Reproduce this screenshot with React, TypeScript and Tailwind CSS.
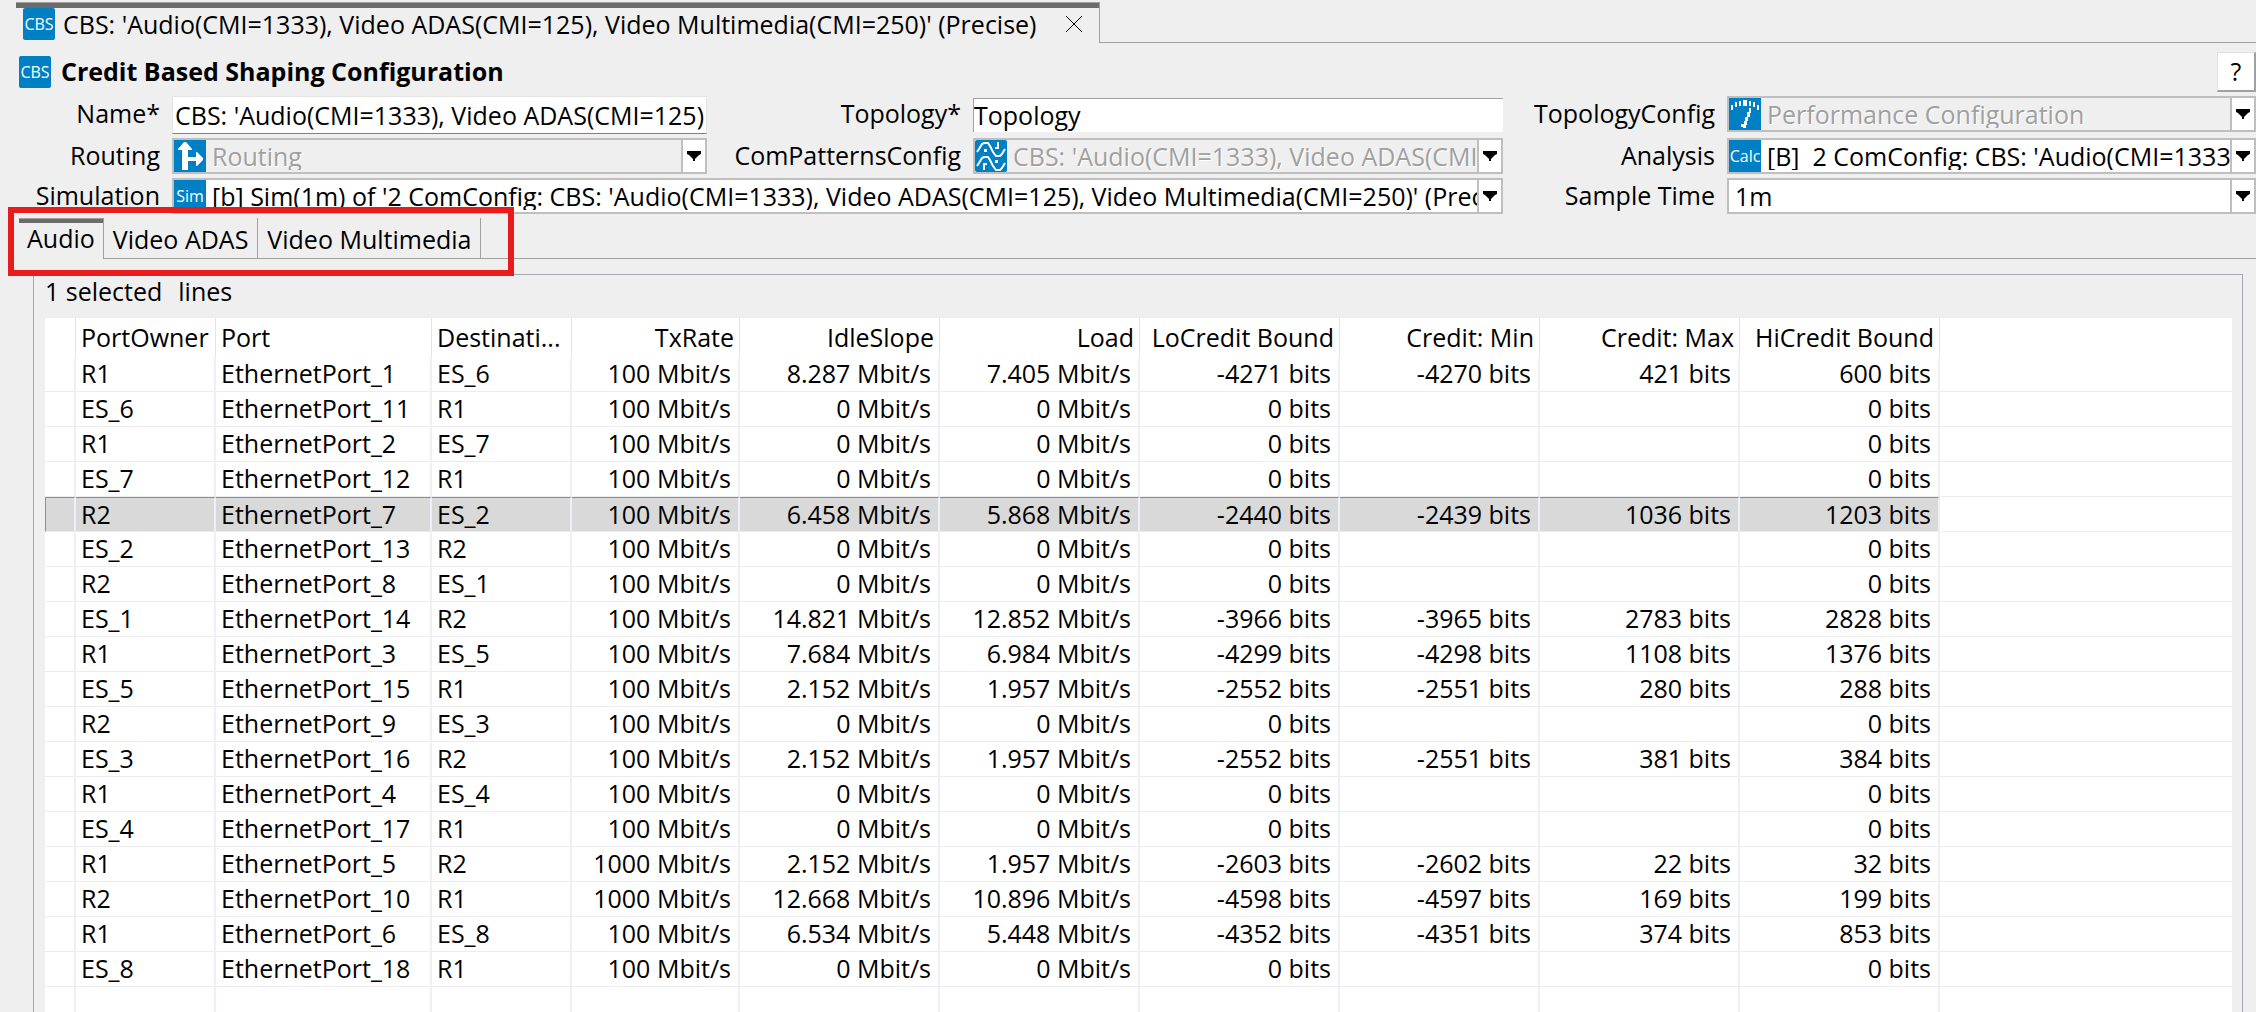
import { ReactNode } from "react";
import clsx from "clsx";

type Row = {
  owner: string;
  port: string;
  dest: string;
  values: string[];
};

const row = (owner: string, port: number, dest: string, ...values: string[]): Row => ({
  owner,
  port: "EthernetPort_" + port,
  dest,
  values,
});

const idle = (owner: string, port: number, dest: string) =>
  row(owner, port, dest, "100 Mbit/s", "0 Mbit/s", "0 Mbit/s", "0 bits", "", "", "0 bits");

const rows: Row[] = [
  row("R1", 1, "ES_6", "100 Mbit/s", "8.287 Mbit/s", "7.405 Mbit/s", "-4271 bits", "-4270 bits", "421 bits", "600 bits"),
  idle("ES_6", 11, "R1"),
  idle("R1", 2, "ES_7"),
  idle("ES_7", 12, "R1"),
  row("R2", 7, "ES_2", "100 Mbit/s", "6.458 Mbit/s", "5.868 Mbit/s", "-2440 bits", "-2439 bits", "1036 bits", "1203 bits"),
  idle("ES_2", 13, "R2"),
  idle("R2", 8, "ES_1"),
  row("ES_1", 14, "R2", "100 Mbit/s", "14.821 Mbit/s", "12.852 Mbit/s", "-3966 bits", "-3965 bits", "2783 bits", "2828 bits"),
  row("R1", 3, "ES_5", "100 Mbit/s", "7.684 Mbit/s", "6.984 Mbit/s", "-4299 bits", "-4298 bits", "1108 bits", "1376 bits"),
  row("ES_5", 15, "R1", "100 Mbit/s", "2.152 Mbit/s", "1.957 Mbit/s", "-2552 bits", "-2551 bits", "280 bits", "288 bits"),
  idle("R2", 9, "ES_3"),
  row("ES_3", 16, "R2", "100 Mbit/s", "2.152 Mbit/s", "1.957 Mbit/s", "-2552 bits", "-2551 bits", "381 bits", "384 bits"),
  idle("R1", 4, "ES_4"),
  idle("ES_4", 17, "R1"),
  row("R1", 5, "R2", "1000 Mbit/s", "2.152 Mbit/s", "1.957 Mbit/s", "-2603 bits", "-2602 bits", "22 bits", "32 bits"),
  row("R2", 10, "R1", "1000 Mbit/s", "12.668 Mbit/s", "10.896 Mbit/s", "-4598 bits", "-4597 bits", "169 bits", "199 bits"),
  row("R1", 6, "ES_8", "100 Mbit/s", "6.534 Mbit/s", "5.448 Mbit/s", "-4352 bits", "-4351 bits", "374 bits", "853 bits"),
  idle("ES_8", 18, "R1"),
];

const headers = ["PortOwner", "Port", "Destinati...", "TxRate", "IdleSlope", "Load", "LoCredit Bound", "Credit: Min", "Credit: Max", "HiCredit Bound"];
const selectedPort = "EthernetPort_7";
const configName = "CBS: 'Audio(CMI=1333), Video ADAS(CMI=125), Video Multimedia(CMI=250)' (Precise)";

function TextIcon({ children, rounded }: { children: string; rounded?: boolean }) {
  return (
    <span
      aria-hidden="true"
      className={clsx(
        "flex size-8 shrink-0 items-center justify-center overflow-hidden bg-[#0080c4] text-base text-white",
        rounded && "rounded-xs"
      )}
    >
      {children}
    </span>
  );
}

function RoutingIcon() {
  return (
    <svg className="size-8 shrink-0 bg-[#0080c4]" viewBox="0 0 32 32" fill="#fff" aria-hidden="true">
      <path d="M11 2h1l6 7v1h-4v7h8v-5h1l6 6v2l-6 6h-1v-5h-8v9H8V10H4V9l6-7z" />
    </svg>
  );
}

function PatternsIcon() {
  return (
    <svg className="size-8 shrink-0 rounded-xs bg-[#0080c4]" viewBox="0 0 32 32" fill="none" stroke="#fff" strokeWidth="2" aria-hidden="true">
      <path d="M2 12l2-3 3-5 2-1h4l2 3 3 6 3 4h4l2-2 3-5M23 2v6h-3M2 26l2-3 3-5 2-1h4l2 3 3 6 3 4h4l2-2 3-5M9 30v-6h3" />
      <path d="M9 9h3v3H9zM20 20h3v3h-3z" fill="#fff" stroke="none" />
    </svg>
  );
}

function GaugeIcon() {
  return (
    <svg className="size-8 shrink-0 bg-[#0080c4]" viewBox="0 0 32 32" fill="#fff" aria-hidden="true">
      <path d="M2 7h2v5H2zM6 4h2v5H6zM10 3h2v5h-2zM14 2h4v6h-4zM20 3h2v5h-2zM24 4h2v5h-2zM28 7h2v5h-2z" />
      <path d="M20 10h2v5h-1v4h-2v4h-1v4h-1v3h-3v-1h-2v-3h3v-3h1v-4h2v-5h2z" />
    </svg>
  );
}

type ComboProps = {
  id: string;
  value: string;
  icon?: ReactNode;
  disabled?: boolean;
  className?: string;
};

function Combo({ id, value, icon, disabled, className }: ComboProps) {
  return (
    <div className={clsx("flex h-9 min-w-0 border-2 border-[#bfbfbf]", disabled ? "bg-[#efefef]" : "bg-white", className)}>
      {icon}
      <select
        id={id}
        disabled={disabled}
        className="h-8 min-w-0 flex-1 appearance-none overflow-hidden bg-transparent pb-[2px] pl-[6px] text-black opacity-100 outline-none disabled:text-[#a0a0a0] disabled:[text-shadow:1px_1px_0_#fff]"
      >
        <option>{value}</option>
      </select>
      <span className="flex w-6 shrink-0 items-center justify-center border-l-2 border-[#bfbfbf] bg-white">
        <svg className="h-[10px] w-[14px]" viewBox="0 0 14 10" aria-hidden="true">
          <path d="M0 0h14v3l-2 1-4 4v2H6V8L2 4 0 3z" />
        </svg>
      </span>
    </div>
  );
}

function Label({ htmlFor, children }: { htmlFor: string; children: string }) {
  return (
    <label htmlFor={htmlFor} className="flex h-9 items-center justify-end pr-3 pb-[2px] whitespace-nowrap">
      {children}
    </label>
  );
}

function EditorTab() {
  return (
    <div className="flex h-[43px] pt-[2px] pl-4">
      <div className="flex border-t border-r border-[#a0a0a0]">
        <div className="flex items-center border-t-[5px] border-[#6b6b6b] pr-4 pb-[3px] pl-[7px]">
          <TextIcon rounded>CBS</TextIcon>
          <span className="pr-2 pl-2 whitespace-nowrap">{configName}</span>
          <button aria-label="Close" className="ml-5">
            <svg className="size-[18px]" viewBox="0 0 18 18" stroke="#000" aria-hidden="true">
              <path d="M1 1l16 16M17 1L1 17" />
            </svg>
          </button>
        </div>
      </div>
      <div className="flex-1 border-b border-[#a0a0a0]" />
    </div>
  );
}

function ConfigForm() {
  return (
    <form className="grid grid-cols-[172px_535fr_266px_530fr_224px_529fr] grid-rows-[38px_36px_36px] gap-y-1">
      <Label htmlFor="name">Name*</Label>
      <input id="name" defaultValue={configName} className="h-[38px] min-w-0 border border-[#e5e5e5] border-b-[#808080] bg-white px-[2px] outline-none" />
      <Label htmlFor="topology">Topology*</Label>
      <input id="topology" defaultValue="Topology" className="mt-[2px] h-[34px] min-w-0 border-t border-l border-[#a0a0a0] bg-white pb-[2px] outline-none" />
      <Label htmlFor="topologyConfig">TopologyConfig</Label>
      <Combo id="topologyConfig" value="Performance Configuration" icon={<GaugeIcon />} disabled />

      <Label htmlFor="routing">Routing</Label>
      <Combo id="routing" value="Routing" icon={<RoutingIcon />} disabled />
      <Label htmlFor="comPatterns">ComPatternsConfig</Label>
      <Combo id="comPatterns" value={configName} icon={<PatternsIcon />} disabled />
      <Label htmlFor="analysis">Analysis</Label>
      <Combo id="analysis" value={"[B] \u00a02 ComConfig: " + configName} icon={<TextIcon>Calc</TextIcon>} />

      <Label htmlFor="simulation">Simulation</Label>
      <Combo id="simulation" value={"[b] Sim(1m) of '2 ComConfig: " + configName} icon={<TextIcon>Sim</TextIcon>} className="col-span-3" />
      <Label htmlFor="sampleTime">Sample Time</Label>
      <Combo id="sampleTime" value="1m" />
    </form>
  );
}

function ClassTabs() {
  return (
    <div className="relative mt-1 flex h-[41px] pl-[19px]" role="tablist">
      <button role="tab" aria-selected="true" className="border-t border-r border-[#a0a0a0]">
        <span className="flex h-10 items-center border-t-4 border-[#6b6b6b] px-2 pb-[6px]">Audio</span>
      </button>
      <button role="tab" aria-selected="false" className="border-r border-b border-[#a0a0a0] px-[9px] pt-[2px]">
        Video ADAS
      </button>
      <button role="tab" aria-selected="false" className="border-r border-b border-[#a0a0a0] px-[9px] pt-[2px]">
        Video Multimedia
      </button>
      <div className="flex-1 border-b border-[#a0a0a0]" />
      {/* highlight around the traffic class tabs */}
      <div className="pointer-events-none absolute -top-[11px] left-2 h-[69px] w-[506px] border-6 border-[#e81c1c]" />
    </div>
  );
}

function PortTable() {
  return (
    <table className="w-full table-fixed border-separate border-spacing-0 bg-white">
      <colgroup>
        <col className="w-[31px]" />
        <col className="w-[140px]" />
        <col className="w-[216px]" />
        <col className="w-[140px]" />
        <col className="w-[168px]" />
        {headers.slice(4).map((h) => (
          <col key={h} className="w-[200px]" />
        ))}
        <col />
      </colgroup>
      <thead>
        <tr className="h-[39px]">
          <th className="border-r border-[#e5e5e5] p-0" />
          {headers.map((h, i) => (
            <th
              key={h}
              className={clsx("border-r border-[#e5e5e5] p-0 pb-[2px] font-normal whitespace-nowrap", i < 3 ? "pl-[5px] text-left" : "pr-[5px] text-right")}
            >
              {h}
            </th>
          ))}
          <th className="p-0" />
        </tr>
      </thead>
      <tbody>
        {rows.map((r) => {
          const selected = r.port === selectedPort;
          const cell = clsx(
            "h-[35px] border-r-2 border-b border-r-[#edf1f7] border-b-[#ededf0] p-0 pb-[2px] leading-[30px] whitespace-nowrap",
            selected && "border-t border-t-[#8f8f8f] bg-[#d9d9d9]"
          );
          return (
            <tr key={r.port} aria-selected={selected}>
              <td className={clsx(cell, selected && "border-l border-l-[#8f8f8f]")} />
              {[r.owner, r.port, r.dest].map((v, i) => (
                <td key={i} className={clsx(cell, "pl-[5px]")}>{v}</td>
              ))}
              {r.values.map((v, i) => (
                <td key={i} className={clsx(cell, "pr-[7px] text-right", selected && i === 6 && "border-r-[#8f8f8f]")}>{v}</td>
              ))}
              <td className="border-b border-[#ededf0] p-0" />
            </tr>
          );
        })}
        <tr className="h-[25px]">
          {["", ...headers].map((h) => (
            <td key={h} className="border-r-2 border-[#edf1f7] p-0" />
          ))}
          <td className="p-0" />
        </tr>
      </tbody>
    </table>
  );
}

export default function App() {
  return (
    <main className="min-h-screen overflow-hidden bg-[#efefef] font-['Open_Sans','Noto_Sans',sans-serif] text-[25px] leading-8 text-black">
      <EditorTab />

      <header className="flex h-[53px] items-center pt-1 pl-[19px]">
        <TextIcon rounded>CBS</TextIcon>
        <h1 className="pb-[2px] pl-[10px] font-bold">Credit Based Shaping Configuration</h1>
        <button aria-label="Help" className="ml-auto h-10 w-[39px] border border-r-2 border-b-2 border-[#e0e0e0] border-r-[#a0a0a0] border-b-[#a0a0a0] bg-white">
          ?
        </button>
      </header>

      <ConfigForm />
      <ClassTabs />

      <section className="mt-[15px] mr-[13px] ml-[33px] border border-b-0 border-[#a5a8b0] pr-[10px] pl-[11px]">
        <p className="flex h-[43px] gap-4">
          <span>1 selected</span>
          <span>lines</span>
        </p>
        <PortTable />
      </section>
    </main>
  );
}
